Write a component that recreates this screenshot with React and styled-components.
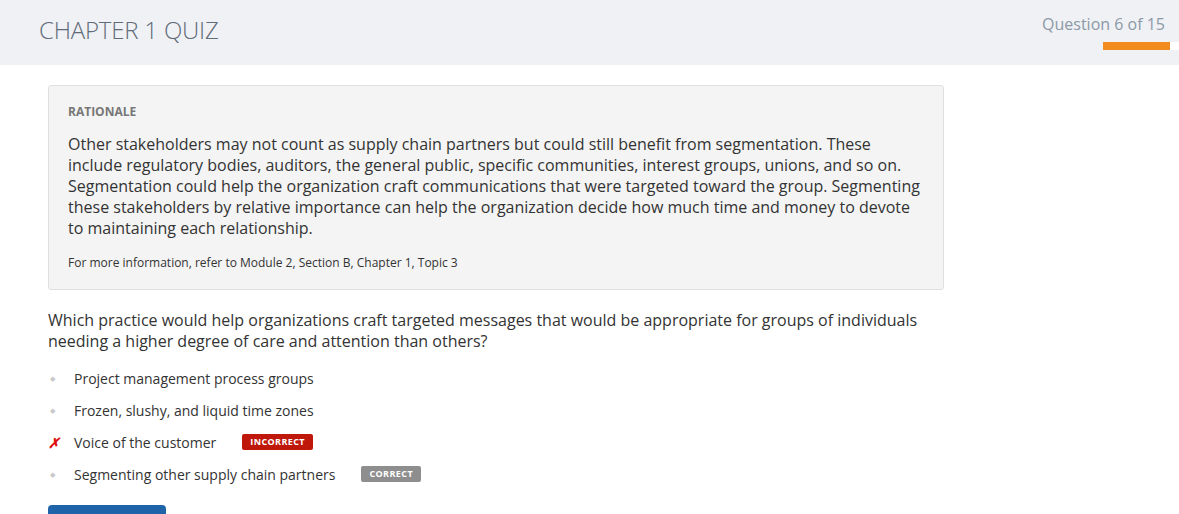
import React from 'react';
import styled, { createGlobalStyle } from 'styled-components';

const GlobalStyle = createGlobalStyle`
  body {
    margin: 0;
    background: #fff;
    font-family: "Open Sans", "Liberation Sans", sans-serif;
  }
`;

const options = [
  { text: 'Project management process groups' },
  { text: 'Frozen, slushy, and liquid time zones' },
  { text: 'Voice of the customer', wrong: true, badge: 'incorrect' },
  { text: 'Segmenting other supply chain partners', badge: 'correct' },
];

function App() {
  return (
    <>
      <GlobalStyle />
      <Header>
        <Title>CHAPTER 1 QUIZ</Title>
        <Progress>
          <Counter>Question 6 of 15</Counter>
          <Track>
            <Fill style={{ width: '88%' }} />
          </Track>
        </Progress>
      </Header>
      <Main>
        <Rationale>
          <Label>RATIONALE</Label>
          <Body>
            Other stakeholders may not count as supply chain partners but could still benefit from
            segmentation. These include regulatory bodies, auditors, the general public, specific
            communities, interest groups, unions, and so on. Segmentation could help the organization
            craft communications that were targeted toward the group. Segmenting these stakeholders by
            relative importance can help the organization decide how much time and money to devote to
            maintaining each relationship.
          </Body>
          <Reference>For more information, refer to Module 2, Section B, Chapter 1, Topic 3</Reference>
        </Rationale>
        <Question>
          Which practice would help organizations craft targeted messages that would be appropriate for
          groups of individuals needing a higher degree of care and attention than others?
        </Question>
        <Options>
          {options.map((o) => (
            <Option key={o.text}>
              <Marker $wrong={o.wrong}>{o.wrong ? '✗' : '◆'}</Marker>
              <span>{o.text}</span>
              {o.badge && <Badge $kind={o.badge}>{o.badge}</Badge>}
            </Option>
          ))}
        </Options>
        <Button type="button">Continue</Button>
      </Main>
    </>
  );
}

const Header = styled.header`
  display: flex;
  justify-content: space-between;
  align-items: flex-start;
  height: 65px;
  background: #eff1f5;
  padding-left: 39px;
`;

const Title = styled.h1`
  margin: 13px 0 0;
  font-size: 24px;
  font-weight: 300;
  color: #5f6b78;
  letter-spacing: -0.2px;
`;

const Progress = styled.div`
  display: flex;
  flex-direction: column;
  align-items: flex-end;
  padding-top: 13px;
`;

const Counter = styled.div`
  font-size: 16px;
  color: #8c99a6;
  margin-right: 14px;
`;

const Track = styled.div`
  width: 76px;
  height: 8px;
  margin-top: 7px;
  background: #fff;
`;

const Fill = styled.div`
  height: 100%;
  background: #f28c1e;
`;

const Main = styled.main`
  width: 896px;
  padding: 20px 0 0 48px;
`;

const Rationale = styled.section`
  background: #f4f4f4;
  border: 1px solid #e0e0e0;
  border-radius: 3px;
  padding: 18px 20px 18px 19px;
`;

const Label = styled.div`
  font-size: 12px;
  font-weight: 700;
  color: #777;
  line-height: 16px;
`;

const Body = styled.p`
  margin: 14px 0 0;
  font-size: 16px;
  line-height: 21px;
  color: #333;
`;

const Reference = styled.p`
  margin: 16px 0 0;
  font-size: 12px;
  line-height: 16px;
  color: #333;
`;

const Question = styled.p`
  margin: 20px 0 0;
  font-size: 16px;
  line-height: 21px;
  color: #333;
`;

const Options = styled.ul`
  list-style: none;
  margin: 10px 0 0;
  padding: 0;
`;

const Option = styled.li`
  display: flex;
  align-items: center;
  height: 32px;
  font-size: 14px;
  color: #333;
`;

const Marker = styled.span`
  flex: 0 0 26px;
  box-sizing: border-box;
  padding-left: ${(p) => (p.$wrong ? '0' : '2px')};
  font-size: ${(p) => (p.$wrong ? '14px' : '7px')};
  font-weight: ${(p) => (p.$wrong ? 700 : 400)};
  color: ${(p) => (p.$wrong ? '#e01010' : '#c8c8c8')};
  font-style: ${(p) => (p.$wrong ? 'italic' : 'normal')};
`;

const Badge = styled.span`
  margin-left: 26px;
  padding: 0 8px;
  height: 16px;
  line-height: 16px;
  border-radius: 2px;
  font-size: 9px;
  font-weight: 700;
  letter-spacing: 0.4px;
  text-transform: uppercase;
  color: #fff;
  background: ${(p) => (p.$kind === 'incorrect' ? '#c0170b' : '#8e8e8e')};
`;

const Button = styled.button`
  margin-top: 15px;
  width: 118px;
  height: 40px;
  border: none;
  border-radius: 4px;
  background: #1f64a8;
  color: #fff;
  font-family: inherit;
  font-size: 14px;
`;

export default App;
